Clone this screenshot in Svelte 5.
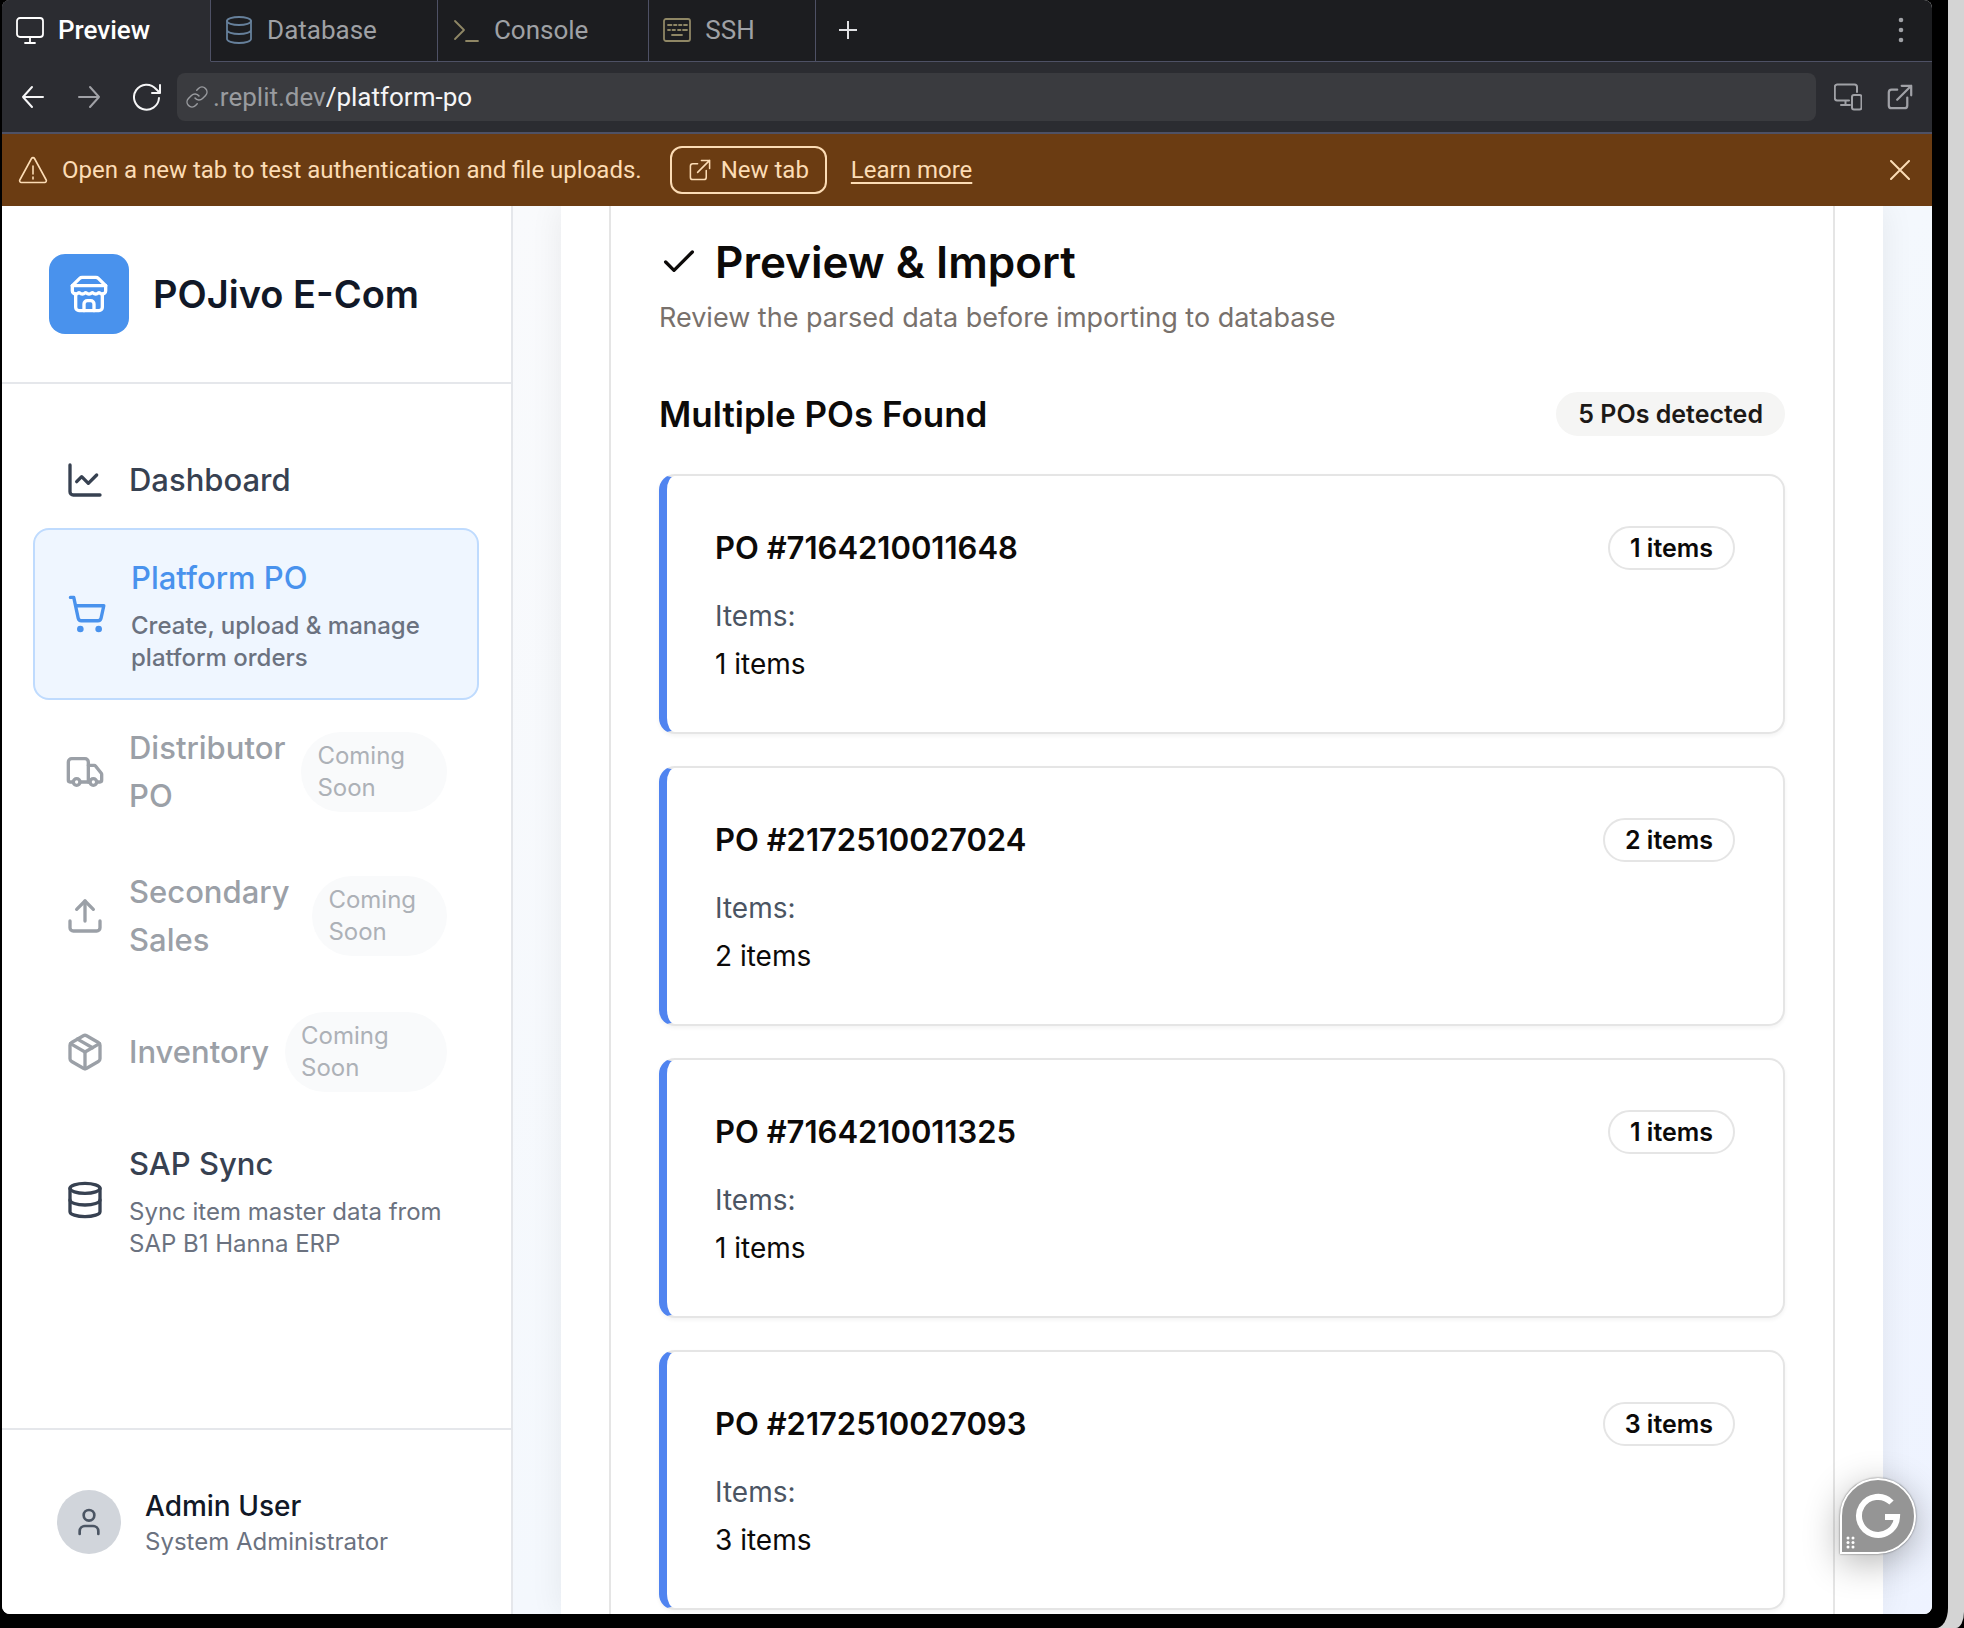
<script>
  const tabs = [
    { name: 'Preview', icon: 'monitor', active: true },
    { name: 'Database', icon: 'cylinder' },
    { name: 'Console', icon: 'prompt' },
    { name: 'SSH', icon: 'keyboard' }
  ];

  const nav = [
    { title: 'Dashboard', icon: 'chart' },
    { title: 'Platform PO', icon: 'cart', text: 'Create, upload & manage platform orders', active: true },
    { title: 'Distributor PO', icon: 'truck', soon: true },
    { title: 'Secondary Sales', icon: 'upload', soon: true },
    { title: 'Inventory', icon: 'box', soon: true },
    { title: 'SAP Sync', icon: 'database', text: 'Sync item master data from SAP B1 Hanna ERP' }
  ];

  const orders = [
    { id: '7164210011648', items: 1 },
    { id: '2172510027024', items: 2 },
    { id: '7164210011325', items: 1 },
    { id: '2172510027093', items: 3 }
  ];

  let path = $state('/platform-po');
</script>

{#snippet navIcon(name)}
  <svg class="nav-icon" viewBox="0 0 24 24" aria-hidden="true">
    {#if name === 'chart'}
      <path d="M3 3v16a2 2 0 0 0 2 2h16" /><path d="m19 9-5 5-4-4-3 3" />
    {:else if name === 'cart'}
      <circle cx="8" cy="21" r="1" /><circle cx="19" cy="21" r="1" />
      <path d="M2.05 2.05h2l2.66 12.42a2 2 0 0 0 2 1.58h9.78a2 2 0 0 0 1.95-1.57l1.65-7.43H5.12" />
    {:else if name === 'truck'}
      <path d="M14 18V6a2 2 0 0 0-2-2H4a2 2 0 0 0-2 2v11a1 1 0 0 0 1 1h2" /><path d="M15 18H9" />
      <path d="M19 18h2a1 1 0 0 0 1-1v-3.65a1 1 0 0 0-.22-.624l-3.48-4.35A1 1 0 0 0 17.52 8H14" />
      <circle cx="17" cy="18" r="2" /><circle cx="7" cy="18" r="2" />
    {:else if name === 'upload'}
      <path d="M21 15v4a2 2 0 0 1-2 2H5a2 2 0 0 1-2-2v-4" /><path d="m17 8-5-5-5 5" /><path d="M12 3v12" />
    {:else if name === 'box'}
      <path d="M11 21.73a2 2 0 0 0 2 0l7-4A2 2 0 0 0 21 16V8a2 2 0 0 0-1-1.73l-7-4a2 2 0 0 0-2 0l-7 4A2 2 0 0 0 3 8v8a2 2 0 0 0 1 1.73z" />
      <path d="M12 22V12" /><path d="m3.3 7 8.7 5 8.7-5" /><path d="m7.5 4.27 9 5.15" />
    {:else}
      <ellipse cx="12" cy="5" rx="9" ry="3" /><path d="M3 5v14a9 3 0 0 0 18 0V5" /><path d="M3 12a9 3 0 0 0 18 0" />
    {/if}
  </svg>
{/snippet}

{#snippet openIcon()}
  <path d="M11 6H6a2.5 2.5 0 0 0-2.5 2.5V20a2.5 2.5 0 0 0 2.500 2.500h11.500a2.500 2.500 0 0 0 2.500-2.500v-7" />
  <path d="M15 2.500h8.500V11M23.500 2.500 11 15" />
{/snippet}

<div class="desk">
  <div class="frame">
    <div class="screen">
      <div class="tabs" role="tablist">
        {#each tabs as tab}
          <button class="tab" class:active={tab.active} role="tab" aria-selected={!!tab.active}>
            <svg class="tab-icon {tab.icon}" viewBox="0 0 28 28" aria-hidden="true">
              {#if tab.icon === 'monitor'}
                <rect x="1" y="2" width="26" height="19" rx="3" /><path d="M14 21v6M9 27h10" />
              {:else if tab.icon === 'cylinder'}
                <ellipse cx="14" cy="5" rx="12" ry="4" /><path d="M2 5v18c0 2.200 5.400 4 12 4s12-1.800 12-4V5M2 14c0 2.200 5.400 4 12 4s12-1.800 12-4" />
              {:else if tab.icon === 'prompt'}
                <path d="m3 5 9 9-9 9M14 25h12" />
              {:else}
                <rect x="1" y="3" width="26" height="22" rx="2" />
                <path d="M5 9h3.500M11 9h2.500M16 9h2.500M21 9h3M5 14h2M9.500 14h2.500M15 14h2.500M20 14h4M9 19h10" />
              {/if}
            </svg>
            <span>{tab.name}</span>
          </button>
        {/each}
        <button class="add" aria-label="New pane">
          <svg viewBox="0 0 18 18" aria-hidden="true"><path d="M9 0v18M0 9h18" /></svg>
        </button>
        <button class="more" aria-label="More options">
          <svg viewBox="0 0 28 28" aria-hidden="true"><circle cx="14" cy="4" r="2.300" /><circle cx="14" cy="14" r="2.300" /><circle cx="14" cy="24" r="2.300" /></svg>
        </button>
      </div>

      <div class="toolbar">
        <button aria-label="Back"><svg viewBox="0 0 28 28" aria-hidden="true"><path d="M24 14H4M13 4 4 14l9 10" /></svg></button>
        <button class="dim forward" aria-label="Forward"><svg viewBox="0 0 28 28" aria-hidden="true"><path d="M4 14h20M15 4l9 10-9 10" /></svg></button>
        <button class="reload" aria-label="Reload"><svg viewBox="0 0 28 28" aria-hidden="true"><path d="M26 15a12.500 12.500 0 1 1-3-9l4 4M27 2v8h-8" /></svg></button>
        <label class="address">
          <svg viewBox="0 0 24 24" aria-hidden="true"><path d="M10 13a5 5 0 0 0 7.540.540l3-3a5 5 0 0 0-7.070-7.070l-1.720 1.710" /><path d="M14 11a5 5 0 0 0-7.540-.540l-3 3a5 5 0 0 0 7.070 7.070l1.710-1.710" /></svg>
          <span>.replit.dev</span>
          <input type="text" bind:value={path} aria-label="Page path" />
        </label>
        <button class="dim" aria-label="Device size"><svg viewBox="0 0 28 28" aria-hidden="true"><path d="M15 17.500H3A2.500 2.500 0 0 1 .800 15V4A2.500 2.500 0 0 1 3 1.500h17.500A2.500 2.500 0 0 1 23 4v5M11.500 18v4M7 22h9" /><rect x="18" y="12" width="9.500" height="14.500" rx="2" /></svg></button>
        <button class="dim" aria-label="Open in new tab"><svg viewBox="1 0 25 25" aria-hidden="true">{@render openIcon()}</svg></button>
      </div>

      <div class="banner" role="status">
        <svg class="warn" viewBox="0 0 30 28" aria-hidden="true"><path d="M13.500 2.500 1.800 24a1.700 1.700 0 0 0 1.500 2.500h23.400a1.700 1.700 0 0 0 1.500-2.500L16.500 2.500a1.700 1.700 0 0 0-3 0zM15 10v8M15 21v2" /></svg>
        <p>Open a new tab to test authentication and file uploads.</p>
        <button class="new-tab"><svg viewBox="1 0 25 25" aria-hidden="true">{@render openIcon()}</svg>New tab</button>
        <a href="#learn">Learn more</a>
        <button class="close" aria-label="Dismiss"><svg viewBox="0 0 20 20" aria-hidden="true"><path d="m1 1 18 18M19 1 1 19" /></svg></button>
      </div>

      <div class="app">
        <aside>
          <header>
            <div class="logo">
              <svg viewBox="0 0 24 24" aria-hidden="true"><path d="m2 7 4.410-4.410A2 2 0 0 1 7.830 2h8.340a2 2 0 0 1 1.420.590L22 7" /><path d="M4 12v8a2 2 0 0 0 2 2h12a2 2 0 0 0 2-2v-8" /><path d="M15 22v-4a2 2 0 0 0-2-2h-2a2 2 0 0 0-2 2v4" /><path d="M2 7h20" /><path d="M22 7v3a2 2 0 0 1-2 2a2.700 2.700 0 0 1-1.590-.630.700.700 0 0 0-.820 0A2.700 2.700 0 0 1 16 12a2.700 2.700 0 0 1-1.590-.630.700.700 0 0 0-.820 0A2.700 2.700 0 0 1 12 12a2.700 2.700 0 0 1-1.590-.630.700.700 0 0 0-.820 0A2.700 2.700 0 0 1 8 12a2.700 2.700 0 0 1-1.590-.630.700.700 0 0 0-.820 0A2.700 2.700 0 0 1 4 12a2 2 0 0 1-2-2V7" /></svg>
            </div>
            <strong>POJivo E-Com</strong>
          </header>
          <nav>
            {#each nav as item}
              <a href="#{item.icon}" class="item" class:current={item.active} class:soon={item.soon} aria-disabled={item.soon}>
                {@render navIcon(item.icon)}
                {#if item.soon}
                  <span class="split"><span class="title">{item.title}</span><span class="pill">Coming Soon</span></span>
                {:else}
                  <span class="copy">
                    <span class="title">{item.title}</span>
                    {#if item.text}<span class="desc">{item.text}</span>{/if}
                  </span>
                {/if}
              </a>
            {/each}
          </nav>
          <footer>
            <div class="avatar"><svg viewBox="0 0 24 24" aria-hidden="true"><path d="M19 21v-2a4 4 0 0 0-4-4H9a4 4 0 0 0-4 4v2" /><circle cx="12" cy="7" r="4" /></svg></div>
            <div><p class="name">Admin User</p><p class="role">System Administrator</p></div>
          </footer>
        </aside>

        <main>
          <div class="sheet">
            <section class="panel">
              <h1><svg viewBox="0 0 24 24" aria-hidden="true"><path d="M20 6 9 17l-5-5" /></svg>Preview &amp; Import</h1>
              <p class="lead">Review the parsed data before importing to database</p>
              <div class="found"><h2>Multiple POs Found</h2><span class="badge filled">5 POs detected</span></div>
              <div class="orders">
                {#each orders as order}
                  <article>
                    <div class="order-head"><h3>PO #{order.id}</h3><span class="badge">{order.items} items</span></div>
                    <dl><dt>Items:</dt><dd>{order.items} items</dd></dl>
                  </article>
                {/each}
              </div>
            </section>
          </div>
        </main>

        <button class="assistant" aria-label="Writing assistant">
          <svg viewBox="0 0 72 72" aria-hidden="true">
            <path class="ring" d="M49.500 22.500A19 19 0 1 0 55 37H43" />
            <g><circle cx="6" cy="58" r="1.500" /><circle cx="11" cy="58" r="1.500" /><circle cx="6" cy="62.500" r="1.500" /><circle cx="11" cy="62.500" r="1.500" /><circle cx="6" cy="67" r="1.500" /><circle cx="11" cy="67" r="1.500" /></g>
          </svg>
        </button>
      </div>
    </div>
  </div>
</div>

<style>
  :global(body) { background: #000; }
  * { box-sizing: border-box; }
  p, h1, h2, h3, dl, dd { margin: 0; }
  button { background: none; border: 0; padding: 0; font: inherit; color: inherit; cursor: pointer; }
  svg { fill: none; stroke: currentColor; stroke-width: 2; stroke-linecap: round; stroke-linejoin: round; flex: none; display: block; }

  .desk { height: 100vh; padding-right: 16px; background: #d4d4d4; border-bottom-right-radius: 8px 16px; }
  .frame { height: 100%; padding: 0 16px 14px 2px; background: #000; border-bottom-right-radius: 12px 20px; }
  .screen { height: 100%; display: flex; flex-direction: column; overflow: hidden; border-radius: 8px; background: #fff; font-family: Inter, "Liberation Sans", sans-serif; }

  .tabs, .toolbar, .banner { display: flex; align-items: center; flex: none; font-family: Roboto, "Liberation Sans", sans-serif; font-size: 26px; line-height: 32px; }
  .tabs { height: 62px; background: #1c1d20; color: #9fa1a5; }
  .tabs > * { height: 62px; padding-bottom: 2px; border-bottom: 1px solid #4e5165; }
  .tab { display: flex; align-items: center; gap: 14px; padding: 0 60px 2px 14px; border-right: 1px solid #4e5165; }
  .tab.active { background: #2b2c31; color: #fff; border-bottom-color: #2b2c31; font-weight: 500; }
  .tab-icon { width: 28px; height: 28px; stroke-width: 1.8; }
  .cylinder { color: #66809b; }
  .prompt, .keyboard { color: #8f8765; }
  .add { width: 64px; display: grid; place-items: center; color: #e0e1e4; }
  .add svg { width: 18px; height: 18px; }
  .more { flex: 1; display: flex; justify-content: flex-end; align-items: center; padding-right: 17px; }
  .more svg { width: 28px; height: 28px; fill: currentColor; stroke: none; }

  .toolbar { height: 72px; padding: 0 18px 0 17px; gap: 24px; background: #2b2c31; border-bottom: 2px solid #4e5165; color: #f5f5f6; }
  .toolbar svg { width: 28px; height: 28px; }
  .toolbar button { width: 28px; height: 28px; flex: none; }
  .toolbar .dim { color: #a0a1a6; }
  .toolbar .forward { margin-left: 4px; }
  .toolbar .reload { margin-left: 6px; }
  .address { flex: 1; height: 48px; display: flex; align-items: center; padding: 0 8px; margin: 0 -6px 0 -8px; border-radius: 8px; background: #3a3b3f; color: #999b9f; }
  .address svg { width: 24px; height: 24px; margin-right: 4px; stroke-width: 1.5; }
  .address input { flex: 1; min-width: 0; border: 0; padding: 0; outline: 0; background: none; font: inherit; color: #f5f5f6; }

  .banner { height: 72px; padding: 0 22px 0 16px; background: #6b3c12; color: #fcdcb5; font-size: 24px; }
  .warn { width: 30px; height: 28px; margin-right: 14px; stroke-width: 1.6; }
  .new-tab { display: flex; align-items: center; gap: 9px; height: 48px; margin: 0 24px 0 28px; padding: 0 16px; border: 2px solid #fcdcb5; border-radius: 12px; }
  .new-tab svg { width: 24px; height: 24px; stroke-width: 1.6; }
  .banner a { color: inherit; text-decoration: underline; text-decoration-thickness: 2px; text-underline-offset: 4px; }
  .close { margin-left: auto; }
  .close svg { width: 20px; height: 20px; stroke-width: 2; }

  .app { flex: 1; min-height: 0; display: flex; position: relative; }
  aside { width: 511px; flex: none; display: flex; flex-direction: column; border-right: 2px solid #e5e7eb; background: #fff; }
  header { display: flex; align-items: center; gap: 24px; padding: 48px 47px; border-bottom: 2px solid #e5e7eb; }
  .logo { width: 80px; height: 80px; display: grid; place-items: center; border-radius: 16px; background: #4992ed; color: #fff; }
  .logo svg { width: 40px; height: 40px; }
  header strong { font-size: 38px; line-height: 56px; font-weight: 600; color: #111827; }

  nav { flex: 1; display: flex; flex-direction: column; padding: 48px 32px 0 31px; }
  .item { display: flex; align-items: center; gap: 24px; padding: 24px 32px; color: #374151; text-decoration: none; }
  .nav-icon { width: 40px; height: 40px; }
  .title { display: block; font-size: 31px; line-height: 48px; font-weight: 500; }
  .desc { display: block; margin-top: 8px; font-size: 24px; line-height: 32px; color: #6b7280; }
  .current { border: 2px solid #bfdbfe; border-radius: 16px; background: #eff6ff; color: #4992ed; }
  .current .desc { font-weight: 500; }
  .soon { color: #9ba0a7; }
  .split { flex: 1; min-width: 0; display: flex; align-items: center; gap: 16px; }
  .pill { padding: 8px 16px; border-radius: 40px; background: #f9fafb; font-size: 24px; line-height: 32px; color: #adb1b7; }

  footer { display: flex; align-items: center; gap: 24px; padding: 56px 55px; border-top: 2px solid #e5e7eb; }
  .avatar { width: 64px; height: 64px; display: grid; place-items: center; border-radius: 50%; background: #d1d5db; color: #4b5563; }
  .avatar svg { width: 32px; height: 32px; }
  .name { font-size: 28px; line-height: 40px; font-weight: 500; color: #111827; }
  .role { font-size: 24px; line-height: 32px; color: #6b7280; }

  main { flex: 1; min-width: 0; display: flex; overflow: hidden; padding: 0 49px 0 48px; background: linear-gradient(135deg, #f9fafc, #f4f8fd 50%, #eef3ff); }
  .sheet { flex: 1; min-width: 0; display: flex; padding: 0 48px; background: #fff; box-shadow: 0 0 32px rgb(0 0 0 / 7%); }
  .panel { flex: 1; min-width: 0; padding: 32px 48px; border: 0 solid #e5e5e5; border-width: 0 2px; }
  h1 { display: flex; align-items: center; gap: 16px; font-size: 44px; line-height: 48px; font-weight: 600; color: #0c0a09; }
  h1 svg { width: 40px; height: 40px; }
  .lead { margin-top: 12px; font-size: 27px; line-height: 40px; color: #78716c; }
  .found { display: flex; align-items: center; justify-content: space-between; margin: 48px 0 32px; }
  h2 { font-size: 35px; line-height: 56px; font-weight: 600; color: #0c0a09; }
  .badge { padding: 4px 20px; border: 2px solid #e5e5e5; border-radius: 22px; font-size: 25px; line-height: 32px; font-weight: 600; color: #0c0a09; white-space: nowrap; }
  .filled { border-color: #f5f5f4; background: #f5f5f4; color: #1c1917; }
  .orders { display: flex; flex-direction: column; gap: 32px; }
  article { padding: 48px; border: 2px solid #e5e5e5; border-left: 8px solid #5084f0; border-radius: 16px; background: #fff; box-shadow: 0 2px 4px rgb(0 0 0 / 5%); }
  .order-head { display: flex; align-items: center; justify-content: space-between; margin-bottom: 24px; }
  h3 { font-size: 31px; line-height: 48px; font-weight: 600; color: #0c0a09; }
  dl { font-size: 28px; line-height: 40px; }
  dt { color: #4b5563; }
  dd { margin-top: 8px; color: #0c0a09; }

  .assistant { position: absolute; right: 16px; bottom: 60px; width: 76px; height: 76px; border: 2px solid #fff; border-radius: 50% 50% 50% 0; background: #959595; color: #fff; box-shadow: 0 0 2px rgb(0 0 0 / 60%), 0 8px 36px rgb(0 0 0 / 30%); }
  .assistant svg { width: 72px; height: 72px; }
  .assistant g { fill: #fff; stroke: none; }
  .ring { stroke-width: 6; stroke-linecap: butt; stroke-linejoin: miter; }
</style>
